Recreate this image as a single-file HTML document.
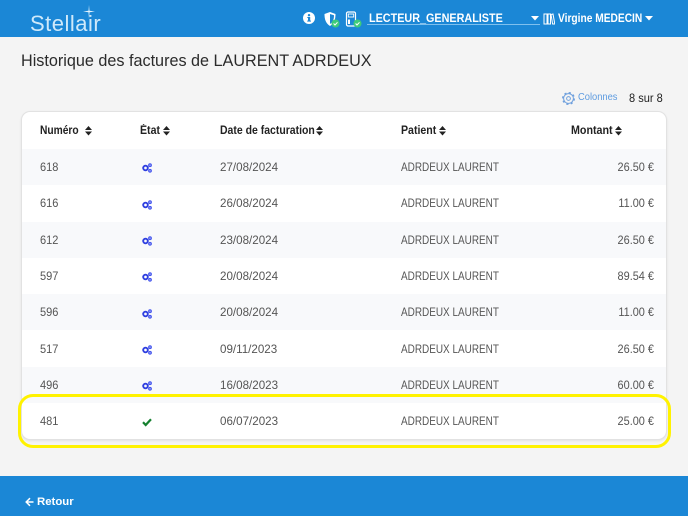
<!DOCTYPE html>
<html lang="fr">
<head>
<meta charset="utf-8">
<title>Historique des factures</title>
<style>
html,body{margin:0;padding:0}
body{width:688px;height:516px;overflow:hidden;position:relative;background:#f4f4f4;font-family:"Liberation Sans",sans-serif;color:#555}
.a{position:absolute;white-space:nowrap}
#top{left:0;top:0;width:688px;height:37px;background:#1b87d6}
#bot{left:0;top:476px;width:688px;height:40px;background:#1b87d6}
#card{left:21px;top:111px;width:644px;height:327px;background:#fff;border:1px solid #e2e2e2;border-radius:9px;box-shadow:0 1px 2px rgba(0,0,0,.08);overflow:hidden}
.row{position:absolute;left:0;width:644px;height:36px}
.s{background:#f8f9fb}
.t{font-size:12px;line-height:14px;color:#555;transform-origin:left center}
.n{transform:scaleX(.92)}
.d{left:220px;transform:scaleX(.967)}
.p{left:401px;transform:scaleX(.83)}
.h{font-size:11.5px;line-height:14px;font-weight:bold;color:#222;transform-origin:left center}
.r{text-align:right;width:80px;left:574px;transform:scaleX(.91);transform-origin:right center}
</style>
</head>
<body>
<div class="a" id="top"></div>
<div class="a" style="left:30px;top:11px;font-size:22px;line-height:25px;color:#cfe9fa;letter-spacing:.5px">Stellair</div>
<svg class="a" style="left:82px;top:4px" width="14" height="16" viewBox="0 0 14 16"><path d="M7 1L7.5 6.7L13 7.5L7.5 8.3L7 15L6.5 8.3L1 7.5L6.5 6.7Z" fill="#e3f3fd"/></svg>

<svg class="a" style="left:303px;top:12px" width="12" height="12" viewBox="0 0 12 12"><circle cx="6" cy="6" r="6" fill="#fff"/><rect x="5" y="5" width="2.2" height="4.5" fill="#1b87d6"/><rect x="4.2" y="8.6" width="3.8" height="1" fill="#1b87d6"/><rect x="4.3" y="5" width="2" height="1" fill="#1b87d6"/><circle cx="6" cy="3.2" r="1.2" fill="#1b87d6"/></svg>
<svg class="a" style="left:323px;top:11px" width="17" height="17" viewBox="0 0 17 17"><path d="M7 1L12.5 3C12.5 8 11.5 12 7 15C2.5 12 1.5 8 1.5 3Z" fill="#fff"/><path d="M7 3V13C10 11 11 8 11 4.2Z" fill="#1b87d6"/><circle cx="12.5" cy="12.5" r="4" fill="#3ecb7b"/><path d="M10.6 12.5L12 14L14.5 11.3" fill="none" stroke="#fff" stroke-width="1"/></svg>
<svg class="a" style="left:345px;top:11px" width="17" height="17" viewBox="0 0 17 17"><rect x="1.5" y="1" width="9" height="14" rx="1.5" fill="none" stroke="#fff" stroke-width="1.2"/><rect x="3.3" y="3" width="5.4" height="3" fill="none" stroke="#fff" stroke-width=".9"/><rect x="3" y="8.5" width="2" height="4.5" fill="#fff"/><circle cx="12.5" cy="12.5" r="4" fill="#3ecb7b"/><path d="M10.6 12.5L12 14L14.5 11.3" fill="none" stroke="#fff" stroke-width="1"/></svg>

<div class="a" style="left:369px;top:11px;font-size:12px;line-height:14px;font-weight:bold;color:#fff;transform:scaleX(.9);transform-origin:left center">LECTEUR_GENERALISTE</div>
<div class="a" style="left:367px;top:24px;width:173px;height:1px;background:#7fc0ee"></div>
<svg class="a" style="left:531px;top:16px" width="8" height="5" viewBox="0 0 8 5"><path d="M0 0H8L4 4.5Z" fill="#fff"/></svg>
<svg class="a" style="left:543px;top:12px" width="12" height="13" viewBox="0 0 12 13"><path d="M1 2H4V12H1ZM5 2H7.5V12H5ZM8 2.5L10 2L11.8 12H9.6Z" fill="none" stroke="#fff" stroke-width="1"/></svg>
<div class="a" style="left:558px;top:11px;font-size:12px;line-height:14px;font-weight:bold;color:#fff;transform:scaleX(.85);transform-origin:left center">Virgine MEDECIN</div>
<svg class="a" style="left:645px;top:16px" width="8" height="5" viewBox="0 0 8 5"><path d="M0 0H8L4 4.5Z" fill="#fff"/></svg>

<div class="a" style="left:21px;top:51px;font-size:16.2px;line-height:20px;color:#2b2b2b">Historique des factures de LAURENT ADRDEUX</div>

<svg class="a" style="left:562px;top:92px" width="13" height="13" viewBox="0 0 24 24"><circle cx="12" cy="12" r="9" fill="none" stroke="#6fa0dd" stroke-width="1.8"/><circle cx="12" cy="12" r="10.5" fill="none" stroke="#6fa0dd" stroke-width="3" stroke-dasharray="4 4.25"/><circle cx="12" cy="12" r="3.5" fill="none" stroke="#6fa0dd" stroke-width="1.8"/></svg>
<div class="a" style="left:578px;top:91px;font-size:10.5px;line-height:13px;color:#5d9be0;transform:scaleX(.89);transform-origin:left center">Colonnes</div>
<div class="a" style="left:629px;top:91px;font-size:12px;line-height:14px;color:#222;transform:scaleX(.92);transform-origin:left center">8 sur 8</div>

<div class="a" id="card">
  <div class="row s" style="top:37px"></div>
  <div class="row" style="top:73px"></div>
  <div class="row s" style="top:110px"></div>
  <div class="row" style="top:146px"></div>
  <div class="row s" style="top:182px"></div>
  <div class="row" style="top:219px"></div>
  <div class="row s" style="top:255px"></div>
</div>

<div class="a h" style="left:40px;top:124px;transform:scaleX(.89)">Numéro</div>
<div class="a h" style="left:140px;top:124px;transform:scaleX(.92)">État</div>
<div class="a h" style="left:220px;top:124px;transform:scaleX(.91)">Date de facturation</div>
<div class="a h" style="left:401px;top:124px;transform:scaleX(.92)">Patient</div>
<div class="a h" style="left:571px;top:124px;transform:scaleX(.93)">Montant</div>

<svg class="a" style="left:85px;top:126px" width="7" height="10" viewBox="0 0 7 10"><path d="M3.5 0L7 4H0ZM0 5.5H7L3.5 9.5Z" fill="#222"/></svg>
<svg class="a" style="left:163px;top:126px" width="7" height="10" viewBox="0 0 7 10"><path d="M3.5 0L7 4H0ZM0 5.5H7L3.5 9.5Z" fill="#222"/></svg>
<svg class="a" style="left:316px;top:126px" width="7" height="10" viewBox="0 0 7 10"><path d="M3.5 0L7 4H0ZM0 5.5H7L3.5 9.5Z" fill="#222"/></svg>
<svg class="a" style="left:439px;top:126px" width="7" height="10" viewBox="0 0 7 10"><path d="M3.5 0L7 4H0ZM0 5.5H7L3.5 9.5Z" fill="#222"/></svg>
<svg class="a" style="left:615px;top:126px" width="7" height="10" viewBox="0 0 7 10"><path d="M3.5 0L7 4H0ZM0 5.5H7L3.5 9.5Z" fill="#222"/></svg>

<svg width="0" height="0" style="position:absolute"><defs><g id="g"><circle cx="3.5" cy="5" r="2.3" fill="none" stroke="#2f3fe0" stroke-width="1.9"/><circle cx="8" cy="2.2" r="1.4" fill="#8d98f2" stroke="#4455ee" stroke-width="1"/><circle cx="8" cy="7.8" r="1.4" fill="#8d98f2" stroke="#4455ee" stroke-width="1"/></g></defs></svg>

<div class="a t n" style="left:40px;top:160px">618</div><svg class="a" style="left:142px;top:163px" width="10" height="10"><use href="#g"/></svg><div class="a t d" style="top:160px">27/08/2024</div><div class="a t p" style="top:160px">ADRDEUX LAURENT</div><div class="a t r" style="top:160px">26.50 €</div>
<div class="a t n" style="left:40px;top:196px">616</div><svg class="a" style="left:142px;top:200px" width="10" height="10"><use href="#g"/></svg><div class="a t d" style="top:196px">26/08/2024</div><div class="a t p" style="top:196px">ADRDEUX LAURENT</div><div class="a t r" style="top:196px">11.00 €</div>
<div class="a t n" style="left:40px;top:233px">612</div><svg class="a" style="left:142px;top:236px" width="10" height="10"><use href="#g"/></svg><div class="a t d" style="top:233px">23/08/2024</div><div class="a t p" style="top:233px">ADRDEUX LAURENT</div><div class="a t r" style="top:233px">26.50 €</div>
<div class="a t n" style="left:40px;top:269px">597</div><svg class="a" style="left:142px;top:272px" width="10" height="10"><use href="#g"/></svg><div class="a t d" style="top:269px">20/08/2024</div><div class="a t p" style="top:269px">ADRDEUX LAURENT</div><div class="a t r" style="top:269px">89.54 €</div>
<div class="a t n" style="left:40px;top:305px">596</div><svg class="a" style="left:142px;top:309px" width="10" height="10"><use href="#g"/></svg><div class="a t d" style="top:305px">20/08/2024</div><div class="a t p" style="top:305px">ADRDEUX LAURENT</div><div class="a t r" style="top:305px">11.00 €</div>
<div class="a t n" style="left:40px;top:342px">517</div><svg class="a" style="left:142px;top:345px" width="10" height="10"><use href="#g"/></svg><div class="a t d" style="top:342px">09/11/2023</div><div class="a t p" style="top:342px">ADRDEUX LAURENT</div><div class="a t r" style="top:342px">26.50 €</div>
<div class="a t n" style="left:40px;top:378px">496</div><svg class="a" style="left:142px;top:381px" width="10" height="10"><use href="#g"/></svg><div class="a t d" style="top:378px">16/08/2023</div><div class="a t p" style="top:378px">ADRDEUX LAURENT</div><div class="a t r" style="top:378px">60.00 €</div>
<div class="a t n" style="left:40px;top:414px">481</div><svg class="a" style="left:142px;top:417px" width="10" height="10" viewBox="0 0 10 10"><path d="M1 5.2L3.7 8L9 2.2" fill="none" stroke="#15802f" stroke-width="2.2"/></svg><div class="a t d" style="top:414px">06/07/2023</div><div class="a t p" style="top:414px">ADRDEUX LAURENT</div><div class="a t r" style="top:414px">25.00 €</div>

<div class="a" style="left:18px;top:394px;width:647px;height:48px;border:3px solid #fff200;border-radius:15px"></div>

<div class="a" id="bot"></div>
<svg class="a" style="left:25px;top:497px" width="9" height="10" viewBox="0 0 9 10"><path d="M8.5 5H1.5M5 1.2L1.2 5L5 8.8" fill="none" stroke="#fff" stroke-width="1.5"/></svg>
<div class="a" style="left:37px;top:495px;font-size:11.4px;line-height:14px;font-weight:bold;color:#fff">Retour</div>
</body>
</html>
